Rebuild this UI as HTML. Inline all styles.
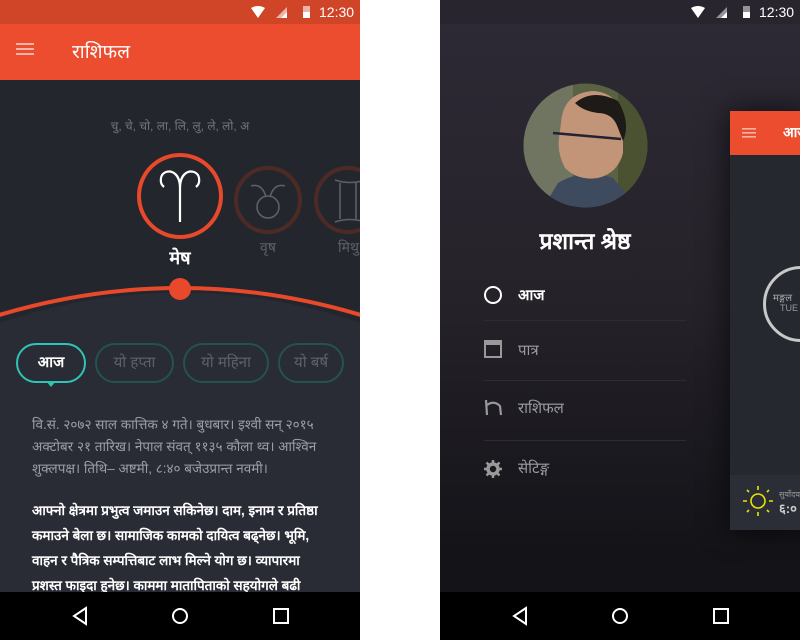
<!DOCTYPE html>
<html><head><meta charset="utf-8">
<style>
*{margin:0;padding:0;box-sizing:border-box}
body{width:800px;height:640px;background:#fff;position:relative;overflow:hidden;font-family:"Liberation Sans",sans-serif}
.a{position:absolute}
.dev{font-family:"Liberation Sans","Noto Sans CJK SC",sans-serif}
.time{color:#fff;font-size:14px;top:4px}
.pill{position:absolute;top:343px;height:40px;border:2px solid #23524f;border-radius:20px;color:#5c616a;font-size:15px;text-align:center;line-height:36px}
.p1{color:#9a9ea5;font-size:13.5px;line-height:22px}
.p2{color:#fff;font-size:13.5px;line-height:25px;font-weight:bold}
.item{position:absolute;left:518px;font-size:15px;color:#9a9aa0}
.sep{position:absolute;left:484px;width:202px;height:1px;background:#2e2c33}
</style></head><body>
<!-- LEFT PHONE -->
<div class="a" style="left:0;top:0;width:360px;height:640px;background:#24262e;overflow:hidden">
  <div class="a" style="left:0;top:0;width:360px;height:24px;background:#d04428"></div>
  <svg class="a" style="left:250px;top:5px" width="70" height="15" viewBox="0 0 70 15">
    <path d="M1 3 Q8 -1 15 3 L8 13 Z" fill="#fff"/>
    <path d="M37 13 L37 2 L26 13 Z" fill="#fff" opacity=".6"/><path d="M37 13 L37 7 L31 13Z" fill="#fff"/>
    <rect x="53" y="1" width="7" height="12" fill="#fff" opacity=".6"/><rect x="53" y="7" width="7" height="6" fill="#fff"/>
  </svg>
  <div class="a time" style="left:319px">12:30</div>
  <div class="a" style="left:0;top:24px;width:360px;height:56px;background:#ec4d2f"></div>
  <svg class="a" style="left:16px;top:43px" width="18" height="13"><rect y="0" width="18" height="2" fill="#f7b3a3"/><rect y="5" width="18" height="2" fill="#f7b3a3"/><rect y="10" width="18" height="2" fill="#f7b3a3"/></svg>
  <div class="a dev" style="left:72px;top:38px;color:#fff;font-size:19px">राशिफल</div>
  <div class="a dev" style="left:0;width:360px;top:117px;text-align:center;color:#71757d;font-size:12px">चु, चे, चो, ला, लि, लु, ले, लो, अ</div>
  <svg class="a" style="left:0;top:150px" width="360" height="500" viewBox="0 150 360 500">
    <path d="M-20 330 Q180 255 380 330 L380 650 L-20 650Z" fill="#2a2c35"/>
    <path d="M-20 321 Q180 255 380 321" fill="none" stroke="#e8492a" stroke-width="4"/>
    <circle cx="180" cy="289" r="11" fill="#e8492a"/>
    <circle cx="180" cy="196" r="41" fill="none" stroke="#e8492a" stroke-width="4"/>
    <path d="M180 222 V188 M180 188 C180 174 172 170 166 172 C160 174 159 183 164 187 M180 188 C180 174 188 170 194 172 C200 174 201 183 196 187" fill="none" stroke="#fff" stroke-width="2.2"/>
    <circle cx="268" cy="200" r="32" fill="none" stroke="#4e2a24" stroke-width="4"/>
    <circle cx="268" cy="207" r="11" fill="none" stroke="#5c6068" stroke-width="1.6"/>
    <path d="M251 186 Q262 183 266 197 M285 186 Q274 183 270 197" fill="none" stroke="#5c6068" stroke-width="1.6"/>
    <circle cx="348" cy="200" r="32" fill="none" stroke="#4e2a24" stroke-width="4"/>
    <path d="M335 180 Q350 185 365 180 M335 222 Q350 217 365 222 M340 183 V219 M356 183 V219" fill="none" stroke="#5c6068" stroke-width="1.6"/>
  </svg>
  <div class="a dev" style="left:150px;width:60px;text-align:center;top:246px;color:#fff;font-size:18px;font-weight:bold">मेष</div>
  <div class="a dev" style="left:248px;width:40px;text-align:center;top:238px;color:#5c6068;font-size:14px">वृष</div>
  <div class="a dev" style="left:338px;top:238px;color:#5c6068;font-size:14px">मिथु</div>
  <div class="pill dev" style="left:16px;width:70px;border-color:#2ec4b6;color:#fff;font-weight:bold">आज</div>
  <div class="a" style="left:46px;top:381px;width:0;height:0;border-left:5px solid transparent;border-right:5px solid transparent;border-top:6px solid #2ec4b6"></div>
  <div class="pill dev" style="left:95px;width:79px">यो हप्ता</div>
  <div class="pill dev" style="left:183px;width:86px">यो महिना</div>
  <div class="pill dev" style="left:278px;width:66px">यो बर्ष</div>
  <div class="a dev p1" style="left:32px;top:414px;width:300px">वि.सं. २०७२ साल कात्तिक ४ गते। बुधबार। इश्वी सन् २०१५ अक्टोबर २१ तारिख। नेपाल संवत् ११३५ कौला थ्व। आश्विन शुक्लपक्ष। तिथि– अष्टमी, ८:४० बजेउप्रान्त नवमी।</div>
  <div class="a dev p2" style="left:32px;top:498px;width:300px">आफ्नो क्षेत्रमा प्रभुत्व जमाउन सकिनेछ। दाम, इनाम र प्रतिष्ठा कमाउने बेला छ। सामाजिक कामको दायित्व बढ्नेछ। भूमि, वाहन र पैत्रिक सम्पत्तिबाट लाभ मिल्ने योग छ। व्यापारमा प्रशस्त फाइदा हुनेछ। काममा मातापिताको सहयोगले बढी</div>
  <div class="a" style="left:0;top:592px;width:360px;height:48px;background:#000"></div>
  <svg class="a" style="left:0;top:592px" width="360" height="48"><path d="M86 16 L74 24 L86 32Z" fill="none" stroke="#fff" stroke-width="2"/><circle cx="180" cy="24" r="7" fill="none" stroke="#fff" stroke-width="2"/><rect x="274" y="17" width="14" height="14" fill="none" stroke="#fff" stroke-width="2"/></svg>
</div>
<!-- RIGHT PHONE -->
<div class="a" style="left:440px;top:0;width:360px;height:640px;background:linear-gradient(#2e2a36 0,#252229 300px,#131318 560px);overflow:hidden">
  <div class="a" style="left:0;top:0;width:360px;height:24px;background:#28252e"></div>
  <svg class="a" style="left:250px;top:5px" width="70" height="15" viewBox="0 0 70 15">
    <path d="M1 3 Q8 -1 15 3 L8 13 Z" fill="#fff"/>
    <path d="M37 13 L37 2 L26 13 Z" fill="#fff" opacity=".5"/><path d="M37 13 L37 7 L31 13Z" fill="#fff"/>
    <rect x="53" y="1" width="7" height="12" fill="#fff" opacity=".5"/><rect x="53" y="7" width="7" height="6" fill="#fff"/>
  </svg>
  <div class="a time" style="left:319px">12:30</div>
  <div class="a" style="left:290px;top:111px;width:80px;height:419px;background:#262830;box-shadow:0 0 30px rgba(0,0,0,.7)">
    <div class="a" style="left:0;top:0;width:80px;height:44px;background:#ec4d2f"></div>
    <svg class="a" style="left:12px;top:17px" width="14" height="10"><rect width="14" height="1.6" fill="#f7b3a3"/><rect y="4" width="14" height="1.6" fill="#f7b3a3"/><rect y="8" width="14" height="1.6" fill="#f7b3a3"/></svg>
    <div class="a dev" style="left:53px;top:12px;color:#fff;font-size:14px;font-weight:bold">आज</div>
    <div class="a" style="left:33px;top:155px;width:76px;height:76px;border:3px solid #c8c8c8;border-radius:50%"></div>
    <div class="a dev" style="left:43px;top:179px;color:#aaa;font-size:10px">मङ्गल</div>
    <div class="a" style="left:50px;top:192px;color:#999;font-size:9px">TUE</div>
    <div class="a" style="left:0;top:364px;width:80px;height:55px;background:#2c2e37"></div>
    <svg class="a" style="left:10px;top:372px" width="36" height="36" viewBox="0 0 36 36"><circle cx="18" cy="18" r="7" fill="none" stroke="#e6e600" stroke-width="1.6"/><path d="M18 3v4M18 29v4M3 18h4M29 18h4M7 7l2 2M27 27l2 2M7 29l2-2M27 9l2-2" stroke="#e6e600" stroke-width="1.6"/></svg>
    <div class="a dev" style="left:49px;top:378px;color:#999;font-size:8px;white-space:nowrap">सुर्योदय</div>
    <div class="a" style="left:49px;top:388px;color:#ccc;font-size:13px;font-weight:bold">६:०</div>
  </div>
  <svg class="a" style="left:83px;top:83px" width="125" height="125" viewBox="0 0 125 125">
    <defs><clipPath id="c"><circle cx="62.5" cy="62.5" r="62"/></clipPath></defs>
    <g clip-path="url(#c)">
      <rect width="125" height="125" fill="#5a6244"/>
      <rect x="0" y="0" width="50" height="125" fill="#6f7560"/>
      <rect x="95" y="0" width="30" height="125" fill="#4a5232"/>
      <path d="M20 125 L35 100 Q60 85 90 95 L115 125Z" fill="#3e4a5e"/>
      <path d="M38 40 Q40 10 70 8 Q100 10 100 45 L100 70 Q95 90 75 95 Q55 98 42 85 Q34 70 36 55Z" fill="#c39578"/>
      <path d="M52 20 Q70 5 95 18 Q108 40 100 58 L95 45 Q90 30 75 30 Q60 28 52 20Z" fill="#1e1a18"/>
      <path d="M30 50 L98 56" stroke="#223" stroke-width="2.5"/>
    </g>
  </svg>
  <div class="a dev" style="left:55px;width:180px;text-align:center;top:224px;color:#fff;font-size:23px;font-weight:bold">प्रशान्त श्रेष्ठ</div>
  <div class="a" style="left:44px;top:286px;width:18px;height:18px;border:2.5px solid #fff;border-radius:50%"></div>
  <div class="item dev" style="left:78px;top:285px;color:#fff;font-weight:bold">आज</div>
  <div class="sep" style="left:44px;top:320px"></div>
  <div class="a" style="left:44px;top:340px;width:18px;height:18px;border:2px solid #999;border-top-width:5px"></div>
  <div class="item dev" style="left:78px;top:340px">पात्र</div>
  <div class="sep" style="left:44px;top:380px"></div>
  <svg class="a" style="left:44px;top:398px" width="19" height="20"><path d="M2 2 L3 17 M3 7 Q10 2 16 8 L17 17" fill="none" stroke="#999" stroke-width="2.2"/></svg>
  <div class="item dev" style="left:78px;top:398px">राशिफल</div>
  <div class="sep" style="left:44px;top:440px"></div>
  <svg class="a" style="left:44px;top:460px" width="18" height="18" viewBox="0 0 18 18"><circle cx="9" cy="9" r="5" fill="none" stroke="#999" stroke-width="3.5"/><path d="M9 0v4M9 14v4M0 9h4M14 9h4M2.5 2.5l3 3M12.5 12.5l3 3M2.5 15.5l3-3M12.5 5.5l3-3" stroke="#999" stroke-width="2.5"/></svg>
  <div class="item dev" style="left:78px;top:458px">सेटिङ्ग</div>
  <div class="a" style="left:0;top:592px;width:360px;height:48px;background:#000"></div>
  <svg class="a" style="left:0;top:592px" width="360" height="48"><path d="M86 16 L74 24 L86 32Z" fill="none" stroke="#fff" stroke-width="2"/><circle cx="180" cy="24" r="7" fill="none" stroke="#fff" stroke-width="2"/><rect x="274" y="17" width="14" height="14" fill="none" stroke="#fff" stroke-width="2"/></svg>
</div>
</body></html>
